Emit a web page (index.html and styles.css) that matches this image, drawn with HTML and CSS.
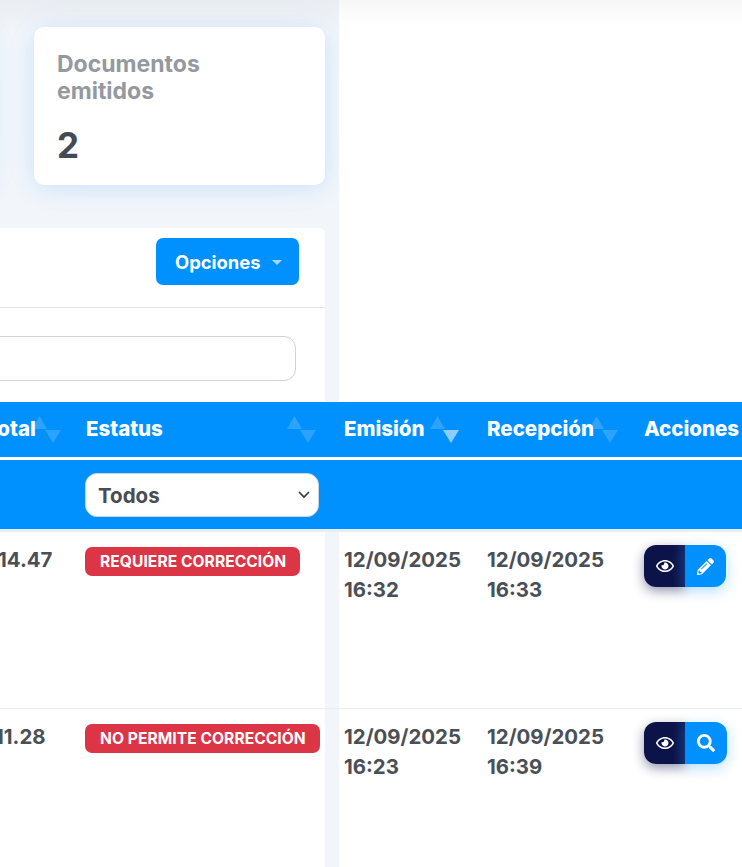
FILE: index.html
```html
<!DOCTYPE html>
<html lang="es">
<head>
<meta charset="utf-8">
<title>Documentos</title>
<link rel="stylesheet" href="styles.css">
</head>
<body>
<div class="page">
  <section class="top">
    <div class="side">
      <div class="cards">
        <div class="card card-prev"></div>
        <div class="card">
          <h3 class="card-title">Documentos emitidos</h3>
          <div class="card-value">2</div>
        </div>
      </div>
      <div class="panel">
        <div class="panel-head">
          <button class="btn-options" type="button">Opciones<span class="caret"></span></button>
        </div>
        <div class="panel-search">
          <input class="search" type="text" aria-label="Buscar">
        </div>
      </div>
    </div>
    <div class="blank"></div>
  </section>

  <section class="table">
    <div class="row head">
      <div class="cell"><span class="total-label">Total</span>
        <svg class="sort sort-total" viewBox="0 0 30 27"><path class="dim" d="M0 13L7.500 0 15 13z"/><path class="dim" d="M13 14h16l-8 13z"/></svg>
      </div>
      <div class="cell">Estatus
        <svg class="sort sort-status" viewBox="0 0 30 27"><path class="dim" d="M0 13L7.500 0 15 13z"/><path class="dim" d="M13 14h16l-8 13z"/></svg>
      </div>
      <div></div>
      <div class="cell">Emisión
        <svg class="sort sort-emit" viewBox="0 0 30 27"><path class="dim" d="M0 13L7.500 0 15 13z"/><path class="lit" d="M13 14h16l-8 13z"/></svg>
      </div>
      <div class="cell">Recepción
        <svg class="sort sort-recv" viewBox="0 0 30 27"><path class="dim" d="M0 13L7.500 0 15 13z"/><path class="dim" d="M13 14h16l-8 13z"/></svg>
      </div>
      <div class="cell">Acciones</div>
    </div>
    <div class="row filters">
      <div></div>
      <div class="cell">
        <select class="filter-select" aria-label="Estatus"><option>Todos</option></select>
      </div>
    </div>
    <div class="sep"></div>

    <div class="row item item-first">
      <div class="cell clip"><span class="amount amount-a">14.47</span></div>
      <div class="cell"><span class="badge">REQUIERE CORRECCIÓN</span></div>
      <div class="gutter"></div>
      <div class="cell">12/09/2025<br>16:32</div>
      <div class="cell">12/09/2025<br>16:33</div>
      <div class="cell">
        <div class="actions">
          <button class="act act-view" type="button" aria-label="Ver"><svg viewBox="0 0 576 512"><path d="M288 144a110.94 110.94 0 0 0-31.24 5 55.4 55.4 0 0 1 7.24 27 56 56 0 0 1-56 56 55.4 55.4 0 0 1-27-7.24A111.71 111.71 0 1 0 288 144zm284.52 97.4C518.29 135.59 410.93 64 288 64S57.68 135.64 3.48 241.41a32.35 32.35 0 0 0 0 29.19C57.71 376.41 165.07 448 288 448s230.32-71.64 284.52-177.41a32.35 32.35 0 0 0 0-29.19zM288 400c-98.65 0-189.09-55-237.93-144C98.91 167 189.34 112 288 112s189.09 55 237.93 144C477.1 345 386.66 400 288 400z"/></svg></button>
          <button class="act act-main" type="button" aria-label="Editar"><svg viewBox="0 0 512 512"><path d="M497.9 142.1l-46.1 46.1c-4.7 4.7-12.3 4.7-17 0l-111-111c-4.7-4.7-4.7-12.3 0-17l46.1-46.1c18.7-18.7 49.1-18.7 67.9 0l60.1 60.1c18.8 18.7 18.8 49.1 0 67.9zM284.2 99.8L21.6 362.4.4 483.9c-2.9 16.4 11.4 30.6 27.8 27.8l121.5-21.3 262.6-262.6c4.7-4.7 4.7-12.3 0-17l-111-111c-4.8-4.7-12.4-4.7-17.1 0zM124.1 339.9c-5.5-5.5-5.5-14.3 0-19.8l154-154c5.5-5.5 14.3-5.5 19.8 0s5.500 14.3 0 19.8l-154 154c-5.500 5.500-14.300 5.500-19.800 0zM88 424h48v36.300l-64.500 11.300-31.100-31.100L51.700 376H88v48z"/></svg></button>
        </div>
      </div>
    </div>

    <div class="row item item-second">
      <div class="cell clip"><span class="amount amount-b">11.28</span></div>
      <div class="cell"><span class="badge">NO PERMITE CORRECCIÓN</span></div>
      <div class="gutter"></div>
      <div class="cell">12/09/2025<br>16:23</div>
      <div class="cell">12/09/2025<br>16:39</div>
      <div class="cell">
        <div class="actions">
          <button class="act act-view" type="button" aria-label="Ver"><svg viewBox="0 0 576 512"><path d="M288 144a110.94 110.94 0 0 0-31.24 5 55.4 55.4 0 0 1 7.24 27 56 56 0 0 1-56 56 55.4 55.4 0 0 1-27-7.24A111.71 111.71 0 1 0 288 144zm284.52 97.4C518.29 135.59 410.93 64 288 64S57.68 135.64 3.48 241.41a32.35 32.35 0 0 0 0 29.19C57.71 376.41 165.07 448 288 448s230.32-71.64 284.52-177.41a32.35 32.35 0 0 0 0-29.19zM288 400c-98.65 0-189.09-55-237.93-144C98.91 167 189.34 112 288 112s189.09 55 237.93 144C477.1 345 386.66 400 288 400z"/></svg></button>
          <button class="act act-main act-wide" type="button" aria-label="Buscar"><svg viewBox="0 0 512 512"><path d="M505 442.7L405.3 343c-4.500-4.500-10.600-7-17-7H372c27.600-35.300 44-79.700 44-128C416 93.100 322.900 0 208 0S0 93.100 0 208s93.100 208 208 208c48.300 0 92.700-16.400 128-44v16.300c0 6.400 2.500 12.500 7 17l99.700 99.700c9.400 9.400 24.600 9.400 33.900 0l28.300-28.300c9.400-9.400 9.400-24.600.1-34zM208 336c-70.700 0-128-57.200-128-128 0-70.700 57.200-128 128-128 70.700 0 128 57.200 128 128 0 70.700-57.200 128-128 128z"/></svg></button>
        </div>
      </div>
    </div>
  </section>
</div>
</body>
</html>
```
FILE: styles.css
```css
* { box-sizing: border-box; }
html, body { margin: 0; height: 100%; overflow: hidden; background: #fff; }
body { font-family: "Inter", "Liberation Sans", sans-serif; color: #474c55; }
.page { width: 742px; height: 867px; overflow: hidden; }

.top { display: flex; height: 402px; }
.side {
  width: 339px;
  padding: 27px 14px 0 0;
  background: linear-gradient(#e9edf1 0, #f2f6fb 32px);
}
.blank { flex: 1; background: linear-gradient(#f7f7f7 0, #fff 26px); }

.cards { display: flex; gap: 44px; height: 158px; margin-bottom: 43px; margin-left: -76px; }
.card {
  flex: 1;
  padding: 23px 23px;
  background: #fff;
  border-radius: 10px;
  box-shadow: 0 4px 24px rgba(0, 120, 230, .13), 0 0 44px rgba(0, 120, 230, .04);
}
.card-prev { flex: 0 0 66px; }
.card-title { margin: 0; width: 170px; padding-top: 1px; font-size: 23px; line-height: 27px; font-weight: 700; color: #94989f; }
.card-value { margin-top: 18px; font-size: 35px; line-height: 44px; font-weight: 700; color: #434a54; }

.panel { height: 174px; background: #fff; border-radius: 0 6px 0 0; }
.panel-head {
  display: flex;
  justify-content: flex-end;
  height: 80px;
  padding: 10px 26px 0 0;
  border-bottom: 1px solid #e2e6ea;
}
.btn-options {
  display: flex;
  align-items: center;
  width: 143px;
  height: 47px;
  padding: 0 0 0 19px;
  border: 0;
  border-radius: 7px;
  background: #0091ff;
  color: #fff;
  font: 700 18.4px "Inter", sans-serif;
}
.caret {
  margin-left: 11px;
  margin-top: 2px;
  border-style: solid;
  border-width: 5px 5px 0;
  border-color: rgba(255, 255, 255, .65) transparent transparent;
}
.panel-search { padding: 28px 29px 0 0; }
.search {
  display: block;
  width: calc(100% + 40px);
  margin-left: -40px;
  height: 45px;
  border: 1px solid #ced4da;
  border-radius: 12px;
  background: #fff;
}

.row { display: grid; grid-template-columns: 71px 254px 14px 143px 157px 103px; }
.cell { position: relative; }

.head {
  height: 55px;
  background: #0091ff;
  color: #fff;
  font-size: 20.5px;
  line-height: 22px;
  font-weight: 800;
}
.head .cell { padding-top: 16px; }
.head .cell:nth-child(2) { padding-left: 15px; }
.head .cell:nth-child(n+4) { padding-left: 5px; white-space: nowrap; }
.total-label { display: block; margin-left: -15px; }
.sort { position: absolute; top: 14px; width: 30px; height: 27px; }
.sort-total { left: 32px; }
.sort-status { left: 216px; }
.sort-emit { left: 91px; }
.sort-recv { left: 107px; }
.dim { fill: rgba(255, 255, 255, .17); }
.lit { fill: rgba(255, 255, 255, .55); }

.filters {
  height: 69px;
  margin-top: 3px;
  background: #0091ff;
}
.filters .cell { padding: 13px 0 0 14px; grid-column: 2 / span 2; }
.filter-select {
  display: block;
  width: 234px;
  height: 44px;
  padding: 0 8px 0 12px;
  border: 1px solid #ced4da;
  border-radius: 12px;
  appearance: none;
  background: #fff url("data:image/svg+xml,%3Csvg xmlns='http://www.w3.org/2000/svg' width='12' height='8' viewBox='0 0 12 8'%3E%3Cpath d='M1.500 1.500L6 6l4.500-4.500' fill='none' stroke='%23343a40' stroke-width='1.700' stroke-linecap='round'/%3E%3C/svg%3E") no-repeat right 8px center;
  color: #474c55;
  font: 700 20.5px "Inter", sans-serif;
}
.sep { height: 3px; background: #e8eef3; }

.item { font-size: 20.4px; line-height: 30px; font-weight: 700; color: #4a4f57; background: #fff; }
.item-first { height: 177px; border-bottom: 1px solid #ebedef; }
.item-second { height: 158px; }
.item .cell { padding-top: 13px; }
.item .cell:nth-child(2) { padding-left: 14px; }
.item .cell:nth-child(n+4) { padding-left: 5px; white-space: nowrap; }
.item .clip { overflow: hidden; }
.gutter { background: #f2f6fb; }
.amount { display: block; }
.amount-a { margin-left: -2px; }
.amount-b { margin-left: -5px; }

.badge {
  display: inline-block;
  height: 29px;
  padding: 0 14px 0 15px;
  border-radius: 7px;
  background: #dc3545;
  color: #fff;
  font-size: 15.6px;
  line-height: 29px;
  font-weight: 700;
  letter-spacing: .05px;
  white-space: nowrap;
  vertical-align: top;
}
.item .cell:nth-child(2) { padding-top: 15px; }
.item .cell:last-child { padding-top: 13px; }

.actions { display: flex; height: 42px; width: max-content; border-radius: 12px; }
.act { display: flex; align-items: center; justify-content: center; width: 41px; height: 42px; padding: 0; border: 0; }
.act svg { width: 18px; height: 16px; fill: #fff; }
.act-view {
  background: linear-gradient(90deg, #0c1348 70%, #13245f);
  border-radius: 12px 0 0 12px;
  box-shadow: 0 4px 12px rgba(13, 20, 70, .45);
}
.act-main {
  background: #0091ff;
  border-radius: 0 12px 12px 0;
  box-shadow: 0 4px 14px rgba(0, 145, 255, .3);
}
.act-wide { width: 42px; }
.act-main svg { width: 17px; height: 17px; }
.act-wide svg { width: 18px; height: 18px; }
```
